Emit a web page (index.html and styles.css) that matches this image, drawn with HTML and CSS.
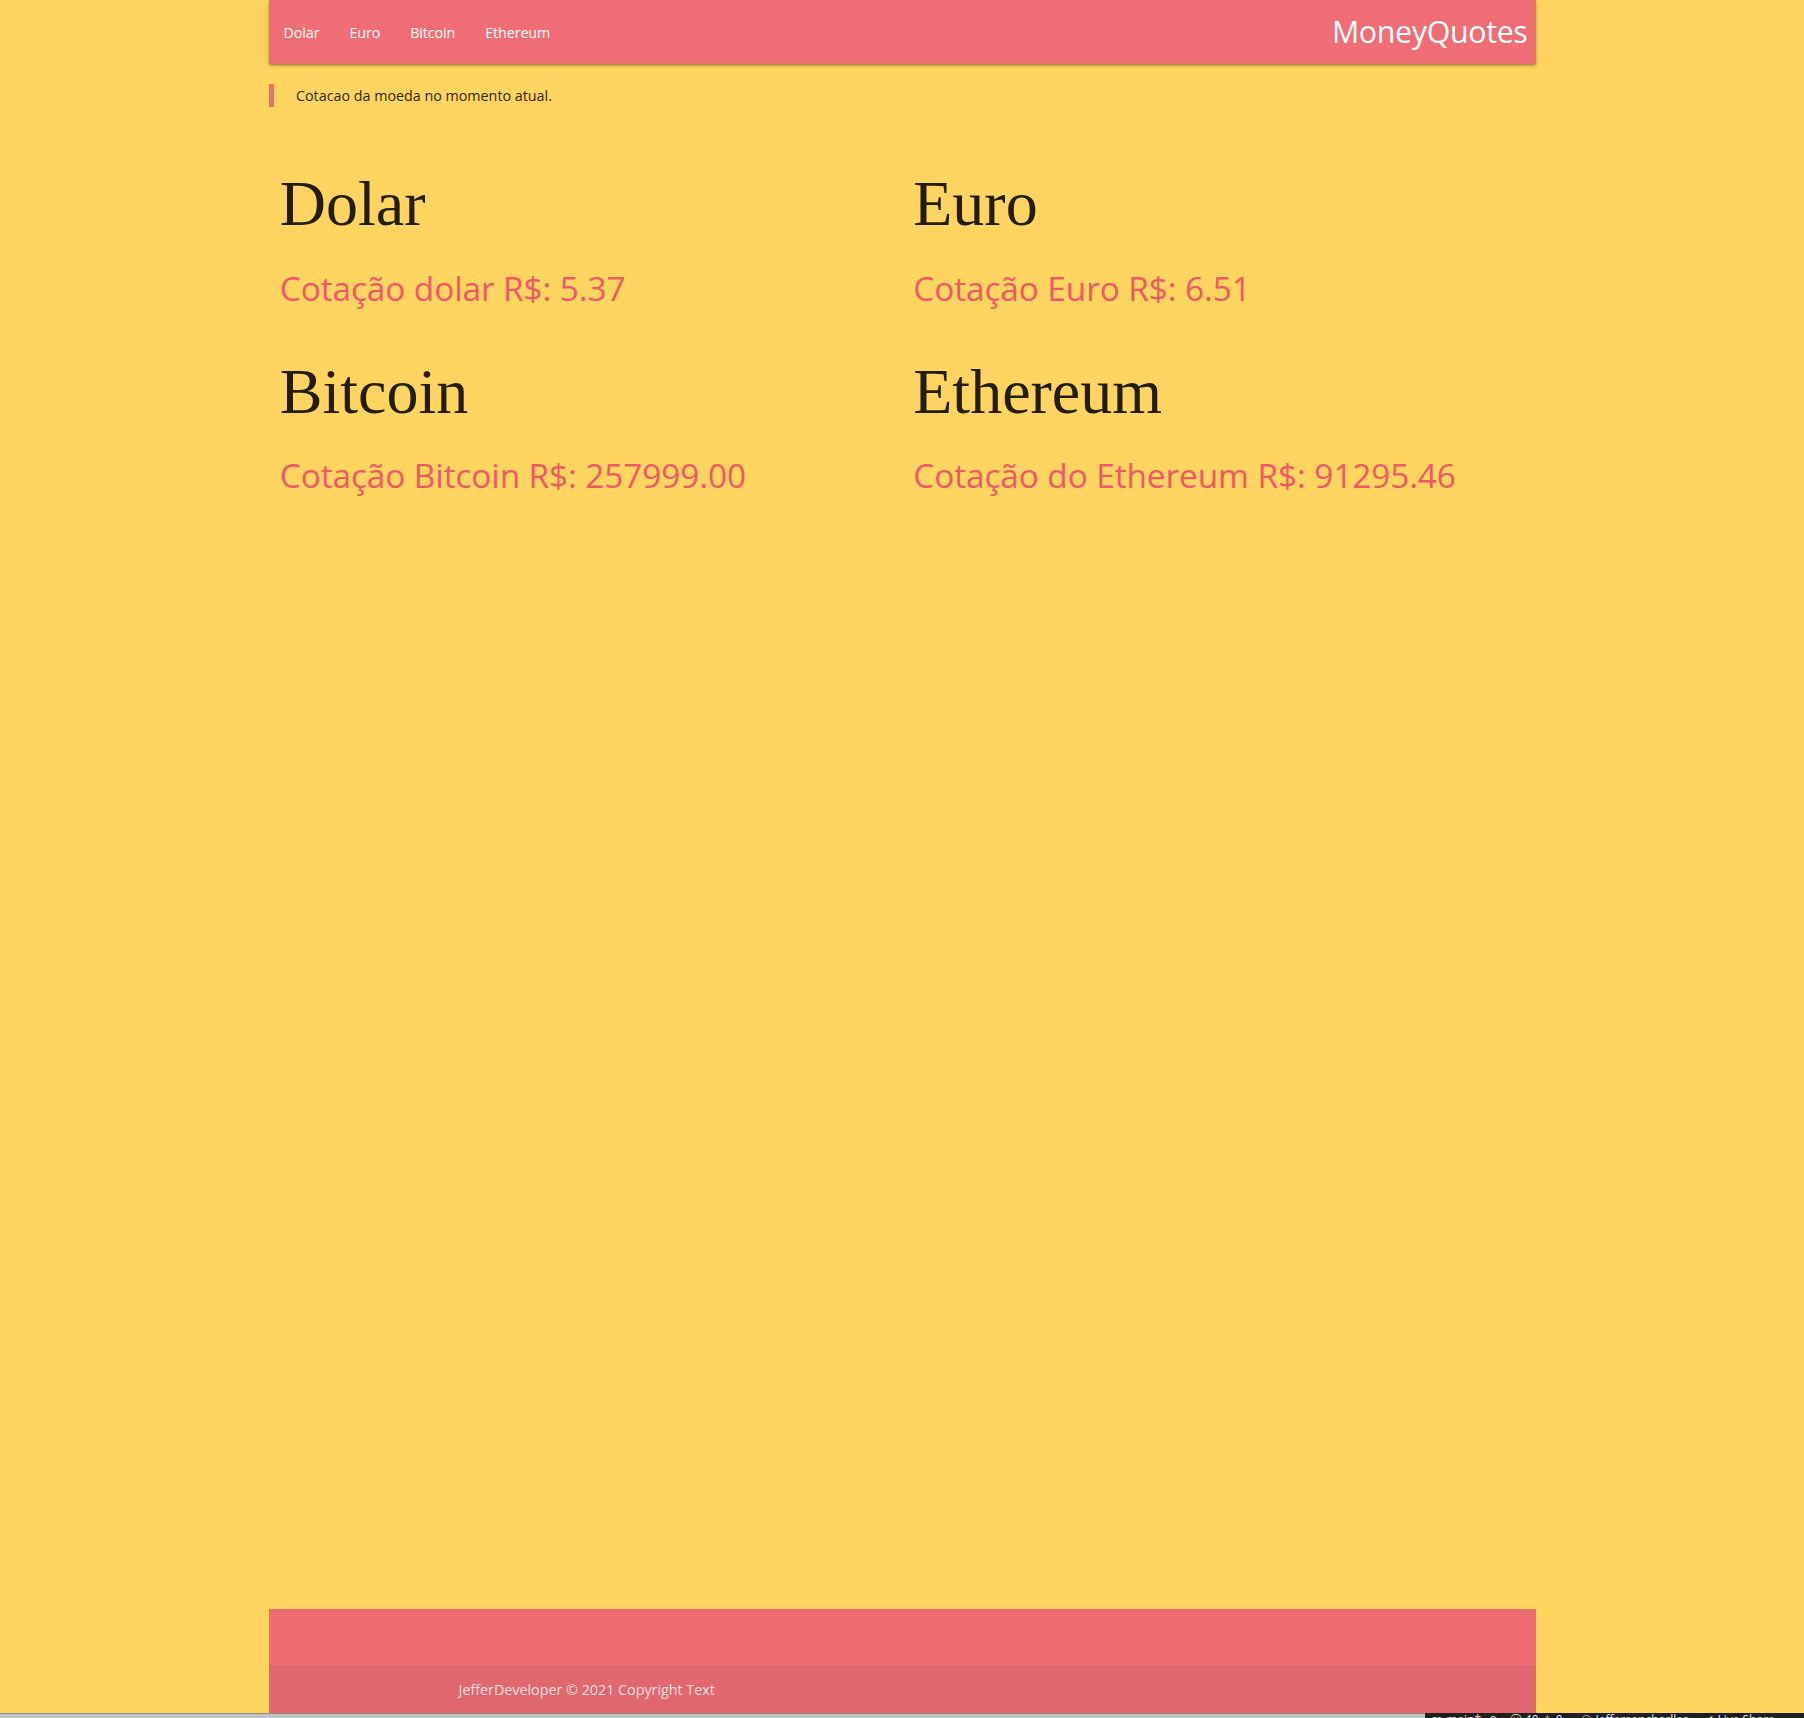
FILE: index.html
```html
<!DOCTYPE html>
<html lang="pt-BR">
<head>
<meta charset="utf-8">
<title>MoneyQuotes</title>
<link rel="stylesheet" href="styles.css">
</head>
<body>
  <div class="page">
    <header class="container">
      <nav class="nav">
        <ul class="nav-links">
          <li><a href="#dolar">Dolar</a></li>
          <li><a href="#euro">Euro</a></li>
          <li><a href="#bitcoin">Bitcoin</a></li>
          <li><a href="#ethereum">Ethereum</a></li>
        </ul>
        <a class="brand" href="#">MoneyQuotes</a>
      </nav>
    </header>

    <main class="container main">
      <blockquote class="note"><span class="note-text">Cotacao da moeda no momento atual.</span></blockquote>
      <section class="quotes">
        <div class="quote" id="dolar">
          <h2 class="quote-title">Dolar</h2>
          <h4 class="quote-value">Cotação dolar R$: 5.37</h4>
        </div>
        <div class="quote" id="euro">
          <h2 class="quote-title">Euro</h2>
          <h4 class="quote-value">Cotação Euro R$: 6.51</h4>
        </div>
        <div class="quote" id="bitcoin">
          <h2 class="quote-title">Bitcoin</h2>
          <h4 class="quote-value">Cotação Bitcoin R$: 257999.00</h4>
        </div>
        <div class="quote" id="ethereum">
          <h2 class="quote-title">Ethereum</h2>
          <h4 class="quote-value">Cotação do Ethereum R$: 91295.46</h4>
        </div>
      </section>
    </main>

    <footer class="container footer">
      <div class="footer-top"></div>
      <div class="footer-copyright">
        <div class="footer-inner">JefferDeveloper © 2021 Copyright Text</div>
      </div>
    </footer>
  </div>
  <div class="statusbar">
    <div class="status-left"></div>
    <div class="status-right">ꝏ main*&nbsp;&nbsp;⟲&nbsp;&nbsp;&nbsp;&nbsp;ⓧ 40 ⚠ 0&nbsp;&nbsp;&nbsp;&nbsp;&nbsp;&nbsp;⚇ Jeffersoncharlles&nbsp;&nbsp;&nbsp;&nbsp;&nbsp;✔ Live Share</div>
  </div>
</body>
</html>
```

FILE: styles.css
```css
* {
  box-sizing: border-box;
}

html, body {
  margin: 0;
  padding: 0;
}

body {
  background: #ffd460;
  font-family: "Open Sans", "Noto Sans", sans-serif;
  color: rgba(0, 0, 0, 0.87);
  min-height: 100vh;
  display: flex;
  flex-direction: column;
}

.page {
  flex: 1 0 auto;
  display: flex;
  flex-direction: column;
}

.container {
  width: 1267px;
  margin: 0 auto;
}

.nav {
  height: 64px;
  background: #ef6e75;
  display: flex;
  justify-content: space-between;
  align-items: center;
  box-shadow: 0 2px 2px 0 rgba(0, 0, 0, 0.14), 0 3px 1px -2px rgba(0, 0, 0, 0.12), 0 1px 5px 0 rgba(0, 0, 0, 0.2);
}

.nav-links {
  list-style: none;
  margin: 0;
  padding: 0;
  display: flex;
  height: 64px;
}

.nav-links a {
  display: block;
  padding: 0 15px;
  line-height: 66px;
  font-size: 14.3px;
  color: #fff;
  text-decoration: none;
  letter-spacing: -0.1px;
}

.brand {
  color: #fff;
  text-decoration: none;
  font-size: 30.3px;
  line-height: 66px;
  padding-right: 8px;
  letter-spacing: -0.3px;
}

.main {
  flex: 1 0 auto;
}

.note {
  margin: 20px 0 0;
  padding-left: 22.5px;
  border-left: 5px solid #ef6e75;
  font-size: 14.3px;
  line-height: 22.5px;
  color: #2d2a12;
}

.note-text {
  display: inline-block;
  transform: translateY(1px);
}

.quotes {
  display: grid;
  grid-template-columns: 1fr 1fr;
  row-gap: 49.5px;
  margin-top: 62.4px;
}

.quote {
  padding: 0 11.25px;
}

.quote-title {
  margin: 0;
  font-family: "Liberation Serif", "Times New Roman", serif;
  font-weight: 400;
  font-size: 64px;
  line-height: 70.4px;
  color: #231d0c;
}

.quote-value {
  margin: 30.3px 0 0;
  font-weight: 400;
  font-size: 33.4px;
  line-height: 37.6px;
  color: #ef5964;
  letter-spacing: -0.1px;
}

.footer {
  background: #ef6c73;
}

.footer-top {
  height: 56px;
}

.footer-copyright {
  height: 48px;
  background: rgba(51, 51, 51, 0.08);
  display: flex;
  align-items: center;
}

.footer-inner {
  width: 70%;
  margin: 0 auto;
  font-size: 14.3px;
  color: rgba(255, 255, 255, 0.8);
}

.statusbar {
  height: 5px;
  display: flex;
  overflow: hidden;
  flex: 0 0 5px;
}

.status-left {
  width: 1425px;
  background: #c3c3c3;
  border-top: 1px solid #8a8a8a;
}

.status-right {
  flex: 1;
  background: #1f1f1f;
  color: #e6e6e6;
  font-size: 12px;
  line-height: 12px;
  white-space: nowrap;
  padding-left: 6px;
  padding-top: 1px;
}
```
